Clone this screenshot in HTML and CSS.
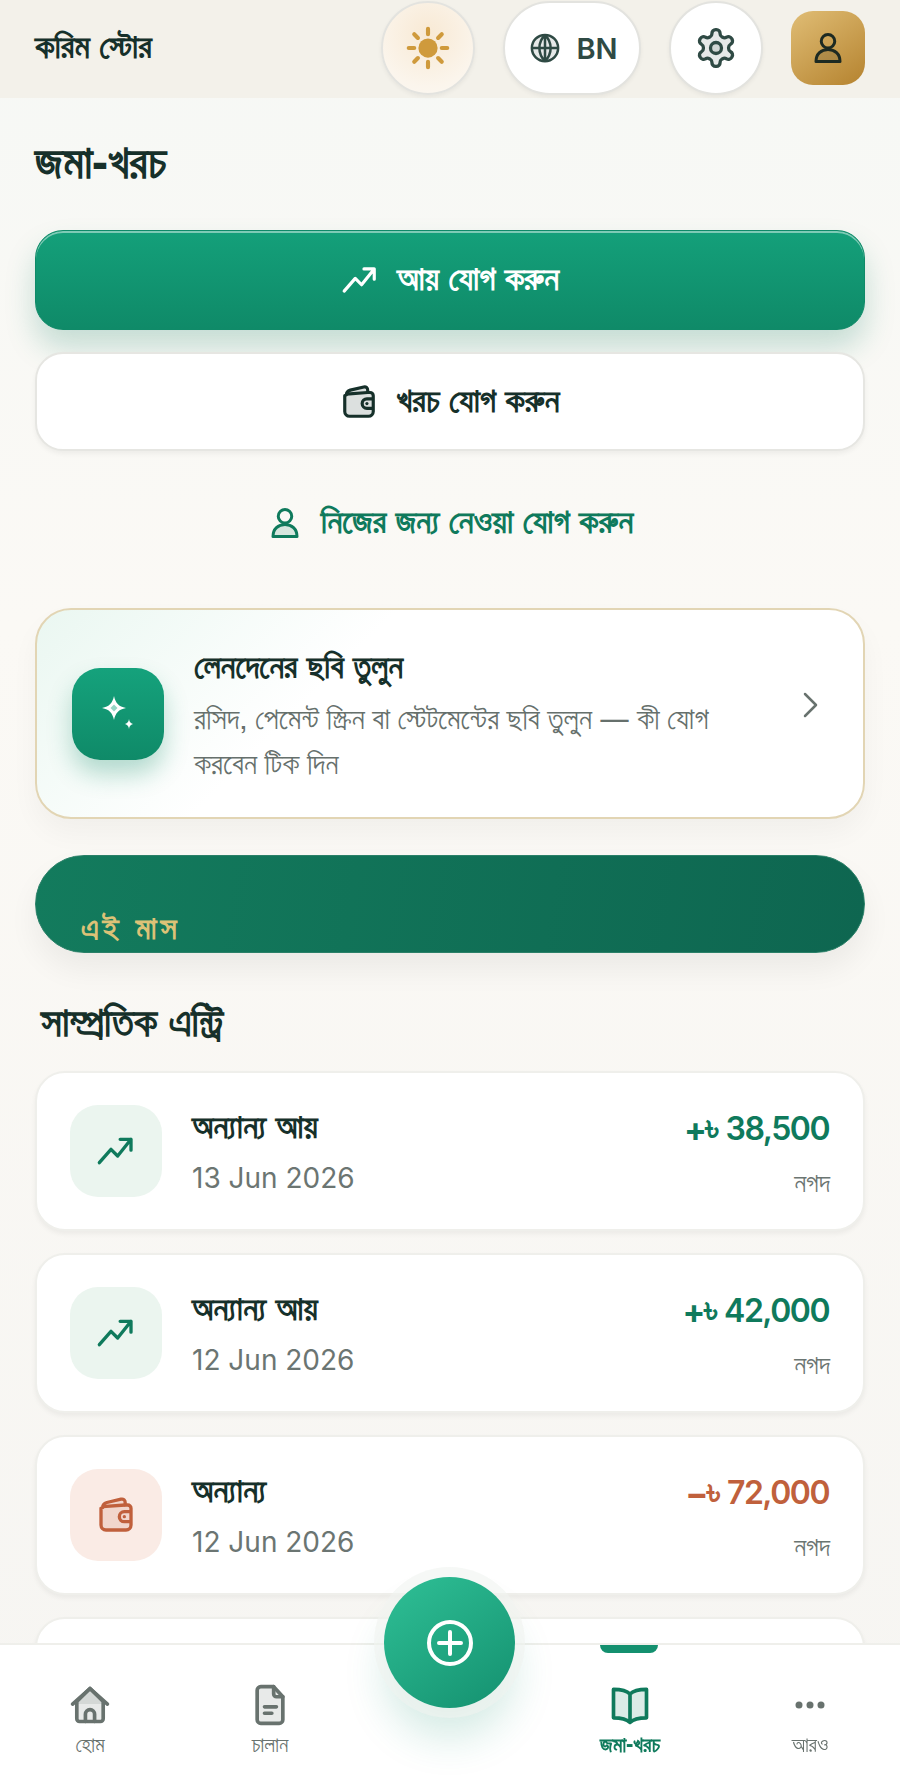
FILE: index.html
```html
<!DOCTYPE html>
<html lang="bn">
<head>
    <meta charset="UTF-8">
    <title>জমা-খরচ</title>
    <link rel="stylesheet" href="styles.css">
</head>
<body>
    <svg class="sprite" width="0" height="0">
        <symbol id="trend" viewBox="0 0 24 24"><path d="M2 19l7-8 4 4 8-10M14.500 5H21v6.500" fill="none" stroke="currentColor" stroke-width="2" stroke-linecap="round" stroke-linejoin="round"/></symbol>
        <symbol id="wallet" viewBox="0 0 24 24"><path d="M4 7.500C4 6 5 5 6.500 4.500L15 2.500c1.500-.3 2.500.5 2.500 2V6H19a2 2 0 0 1 2 2v10a3 3 0 0 1-3 3H6a3 3 0 0 1-3-3V8z" fill="currentColor" fill-opacity=".15" stroke="currentColor" stroke-width="2" stroke-linejoin="round"/><path d="M4 7l13.500-1M21 10h-4a3 3 0 0 0 0 6h4" fill="none" stroke="currentColor" stroke-width="2"/><circle cx="17" cy="13" r="1" fill="currentColor"/></symbol>
        <symbol id="user" viewBox="0 0 24 24"><circle cx="12" cy="7.500" r="4.500" fill="none" stroke="currentColor" stroke-width="2"/><path d="M4 21c0-5 3.500-8 8-8s8 3 8 8z" fill="currentColor" fill-opacity=".15" stroke="currentColor" stroke-width="2" stroke-linejoin="round"/></symbol>
    </svg>

    <header class="topbar">
        <div class="store-name">করিম স্টোর</div>
        <div class="top-actions">
            <button class="round-btn sun-btn">
                <svg width="44" height="44" viewBox="0 0 48 48" fill="none" stroke="#cf9a3c" stroke-width="4.500" stroke-linecap="round">
                    <circle cx="24" cy="24" r="10.500" fill="#cf9a3c" stroke="none"/>
                    <path d="M24 3v6M24 39v6M3 24h6M39 24h6M9 9l4 4M35 35l4 4M9 39l4-4M35 13l4-4"/>
                </svg>
            </button>
            <button class="round-btn lang-btn">
                <svg width="30" height="30" viewBox="0 0 24 24" fill="#2f4a44" fill-opacity=".12" stroke="#2f4a44" stroke-width="2">
                    <circle cx="12" cy="12" r="10.500"/>
                    <path d="M1.500 12h21M12 1.500v21M12 1.500c-6 6-6 15 0 21M12 1.500c6 6 6 15 0 21" fill="none"/>
                </svg>
                <span>BN</span>
            </button>
            <button class="round-btn gear-btn">
                <svg width="44" height="44" viewBox="0 0 24 24" fill="#2f4a44" fill-opacity=".12" stroke="#2f4a44" stroke-width="1.800" stroke-linejoin="round">
                    <path d="M12.220 2h-.44a2 2 0 0 0-2 2v.18a2 2 0 0 1-1 1.730l-.43.25a2 2 0 0 1-2 0l-.15-.08a2 2 0 0 0-2.730.73l-.22.38a2 2 0 0 0 .73 2.730l.15.1a2 2 0 0 1 1 1.720v.51a2 2 0 0 1-1 1.740l-.15.09a2 2 0 0 0-.73 2.730l.22.38a2 2 0 0 0 2.730.73l.15-.08a2 2 0 0 1 2 0l.43.25a2 2 0 0 1 1 1.730V20a2 2 0 0 0 2 2h.44a2 2 0 0 0 2-2v-.18a2 2 0 0 1 1-1.730l.43-.25a2 2 0 0 1 2 0l.15.08a2 2 0 0 0 2.730-.73l.22-.39a2 2 0 0 0-.73-2.730l-.15-.08a2 2 0 0 1-1-1.740v-.5a2 2 0 0 1 1-1.740l.15-.09a2 2 0 0 0 .73-2.730l-.22-.38a2 2 0 0 0-2.730-.73l-.15.08a2 2 0 0 1-2 0l-.43-.25a2 2 0 0 1-1-1.730V4a2 2 0 0 0-2-2z"/>
                    <circle cx="12" cy="12" r="3"/>
                </svg>
            </button>
            <button class="avatar-btn">
                <svg width="36" height="36"><use href="#user"/></svg>
            </button>
        </div>
    </header>

    <main class="content">
        <h1 class="page-title">জমা-খরচ</h1>

        <button class="action-btn income-btn">
            <svg width="38" height="38"><use href="#trend"/></svg>
            আয় যোগ করুন
        </button>
        <button class="action-btn expense-btn">
            <svg width="38" height="38"><use href="#wallet"/></svg>
            খরচ যোগ করুন
        </button>
        <button class="action-btn self-btn">
            <svg width="36" height="36"><use href="#user"/></svg>
            নিজের জন্য নেওয়া যোগ করুন
        </button>

        <div class="photo-card">
            <div class="photo-icon">
                <svg width="52" height="52" viewBox="0 0 52 52" fill="#fff">
                    <path d="M22 8c1.500 7 4.500 10.500 12 12-7.500 1.500-10.500 5-12 12-1.500-7-4.500-10.500-12-12 7.500-1.500 10.500-5 12-12z"/>
                    <path d="M22 16.500l3.500 3.500-3.500 3.500-3.500-3.500z" fill="#15a27c" fill-opacity=".45"/>
                    <path d="M37 31c.4 3 1.500 4.200 4 5-2.500.8-3.600 2-4 5-.4-3-1.500-4.200-4-5 2.500-.8 3.600-2 4-5z"/>
                </svg>
            </div>
            <div class="photo-text">
                <div class="photo-title">লেনদেনের ছবি তুলুন</div>
                <div class="photo-sub">রসিদ, পেমেন্ট স্ক্রিন বা স্টেটমেন্টের ছবি তুলুন — কী যোগ করবেন টিক দিন</div>
            </div>
            <svg class="chevron" width="20" height="30" viewBox="0 0 20 30" fill="none" stroke="#68726e" stroke-width="2.500" stroke-linecap="round" stroke-linejoin="round"><path d="M4 4l11 11L4 26"/></svg>
        </div>

        <div class="month-banner">
            <span class="month-label">এই মাস</span>
        </div>

        <h2 class="section-title">সাম্প্রতিক এন্ট্রি</h2>

        <div class="entry">
            <div class="entry-icon icon-in"><svg width="40" height="40"><use href="#trend"/></svg></div>
            <div class="entry-info">
                <div class="entry-name">অন্যান্য আয়</div>
                <div class="entry-date">13 Jun 2026</div>
            </div>
            <div class="entry-right">
                <div class="entry-amount amount-in"><span class="taka">+৳</span> 38,500</div>
                <div class="entry-method">নগদ</div>
            </div>
        </div>
        <div class="entry">
            <div class="entry-icon icon-in"><svg width="40" height="40"><use href="#trend"/></svg></div>
            <div class="entry-info">
                <div class="entry-name">অন্যান্য আয়</div>
                <div class="entry-date">12 Jun 2026</div>
            </div>
            <div class="entry-right">
                <div class="entry-amount amount-in"><span class="taka">+৳</span> 42,000</div>
                <div class="entry-method">নগদ</div>
            </div>
        </div>
        <div class="entry">
            <div class="entry-icon icon-out"><svg width="40" height="40"><use href="#wallet"/></svg></div>
            <div class="entry-info">
                <div class="entry-name">অন্যান্য</div>
                <div class="entry-date">12 Jun 2026</div>
            </div>
            <div class="entry-right">
                <div class="entry-amount amount-out"><span class="taka">−৳</span> 72,000</div>
                <div class="entry-method">নগদ</div>
            </div>
        </div>
        <div class="entry"></div>
    </main>

    <nav class="bottom-nav">
        <a class="nav-item">
            <svg width="44" height="44" viewBox="0 0 24 24" fill="#68726e" fill-opacity=".15" stroke="#68726e" stroke-width="2" stroke-linecap="round" stroke-linejoin="round"><path d="M2.500 11.500L12 3l9.500 8.500"/><path d="M4.800 10v9.500A1.500 1.500 0 0 0 6.300 21h11.400a1.500 1.500 0 0 0 1.500-1.500V10L12 3z"/><path d="M9.500 21v-4a2.500 2.500 0 0 1 5 0v4" fill="none"/></svg>
            <span>হোম</span>
        </a>
        <a class="nav-item">
            <svg width="44" height="44" viewBox="0 0 24 24" fill="#68726e" fill-opacity=".15" stroke="#68726e" stroke-width="2" stroke-linecap="round" stroke-linejoin="round"><path d="M7 2h7l5 5.500V20a2 2 0 0 1-2 2H7a2 2 0 0 1-2-2V4a2 2 0 0 1 2-2z"/><path d="M14 2v4a1.500 1.500 0 0 0 1.500 1.500H19M9 13h6.500M9 16.500h4" fill="none"/></svg>
            <span>চালান</span>
        </a>
        <div class="nav-item nav-gap">
            <button class="fab">
                <svg width="48" height="48" viewBox="0 0 48 48" fill="none" stroke="#fff" stroke-width="4" stroke-linecap="round"><circle cx="24" cy="24" r="21"/><path d="M24 13v22M13 24h22"/></svg>
            </button>
        </div>
        <a class="nav-item nav-active">
            <svg width="44" height="44" viewBox="0 0 24 24" fill="#0f7a5c" fill-opacity=".15" stroke="#0f7a5c" stroke-width="2" stroke-linejoin="round"><path d="M12 6C10 4 7 3.500 3 3.500V19c4 0 7 .5 9 2.500 2-2 5-2.500 9-2.500V3.500C17 3.500 14 4 12 6zM12 6v15"/></svg>
            <span>জমা-খরচ</span>
        </a>
        <a class="nav-item">
            <svg width="44" height="44" viewBox="0 0 44 44" fill="#68726e"><circle cx="11" cy="22" r="3.500"/><circle cx="22" cy="22" r="3.500"/><circle cx="33" cy="22" r="3.500"/></svg>
            <span>আরও</span>
        </a>
    </nav>
</body>
</html>
```

FILE: styles.css
```css
* { box-sizing: border-box; }
html, body { margin: 0; padding: 0; height: 1791px; overflow: hidden; }
body { font-family: "FreeSans", "Noto Sans", sans-serif; background: linear-gradient(180deg, #f6f8f5 0%, #fbf9f5 35%, #f6f5f2 100%); color: #16302a; }
button { font-family: inherit; border: none; cursor: pointer; }
.sprite { display: block; }

.topbar { height: 98px; display: flex; align-items: center; justify-content: space-between; padding: 0 35px 2px; background: #f3f1ea; }
.store-name { font-size: 34px; font-weight: 700; color: #16302a; }
.top-actions { display: flex; align-items: center; gap: 28px; }
.round-btn { height: 94px; width: 94px; border-radius: 47px; background: #fff; border: 2px solid #e3e3df; display: flex; align-items: center; justify-content: center; box-shadow: 0 2px 4px rgba(0,0,0,0.05); padding: 0; }
.sun-btn { background: radial-gradient(circle at 50% 35%, #f8e9d4 0%, #fbf5ec 70%, #fbf8f3 100%); }
.lang-btn { width: 138px; gap: 16px; padding-left: 4px; }
.lang-btn span { font-family: Inter, sans-serif; font-size: 29px; font-weight: 600; color: #2f4a44; }
.avatar-btn { width: 74px; height: 74px; border-radius: 22px; background: linear-gradient(145deg, #e0bd75, #b5832f); color: #1d2a22; display: flex; align-items: center; justify-content: center; padding: 0; }

.content { padding: 0 35px; }
.page-title { margin: 36px 0 36px; font-size: 46px; line-height: 60px; font-weight: 700; color: #16302a; }

.action-btn { width: 100%; display: flex; align-items: center; justify-content: center; gap: 18px; font-size: 34px; font-weight: 700; line-height: 44px; }
.income-btn { height: 100px; border-radius: 28px; background: linear-gradient(180deg, #14a07a, #0f8a68); color: #fff; border: 1px solid #0f8a68; box-shadow: inset 0 2px 0 rgba(255,255,255,0.45), 0 18px 30px rgba(15,123,95,0.22); }
.expense-btn { height: 99px; margin-top: 22px; border-radius: 28px; background: #fff; color: #16302a; border: 2px solid #e6e6e2; box-shadow: 0 3px 5px rgba(0,0,0,0.05); }
.self-btn { height: 96px; margin-top: 24px; background: none; color: #0f7a5c; }

.photo-card { height: 211px; margin-top: 37px; padding: 0 35px; display: flex; align-items: center; gap: 30px; border-radius: 36px; border: 2px solid #e2d5b4; background: linear-gradient(135deg, #eaf7f1 0%, #ffffff 35%); box-shadow: 0 14px 28px rgba(0,0,0,0.04); }
.photo-icon { width: 92px; height: 92px; flex: none; border-radius: 28px; display: flex; align-items: center; justify-content: center; background: linear-gradient(180deg, #15a27c, #0f8a68); box-shadow: 0 14px 24px rgba(15,138,104,0.3); }
.photo-text { flex: 1; padding-top: 6px; }
.photo-title { font-size: 33.500px; font-weight: 700; line-height: 44px; color: #16302a; margin-bottom: 8px; }
.photo-sub { font-size: 30px; line-height: 45px; color: #66706c; width: 540px; }
.chevron { flex: none; margin: -18px 7px 0 0; }

.month-banner { height: 98px; margin-top: 36px; padding: 55px 45px 0; border-radius: 49px; background: linear-gradient(100deg, #137b5d, #0e6650); border: 1px solid #2b8068; box-shadow: 0 16px 30px rgba(0,0,0,0.06); }
.month-label { font-size: 32px; line-height: 36px; font-weight: 600; letter-spacing: 4px; color: #dcc277; display: block; }

.section-title { margin: 45px 0 21px 6px; font-size: 41px; line-height: 52px; font-weight: 700; color: #16302a; }

.entry { height: 160px; margin-bottom: 22px; padding: 0 33px; display: flex; align-items: center; gap: 30px; background: #fff; border-radius: 30px; border: 2px solid #efefeb; box-shadow: 0 3px 5px rgba(0,0,0,0.05); }
.entry-icon { width: 92px; height: 92px; flex: none; border-radius: 28px; display: flex; align-items: center; justify-content: center; }
.icon-in { background: #ebf5ef; color: #0f7a5c; }
.icon-out { background: #faebe5; color: #c0603c; }
.entry-info { flex: 1; padding-top: 4px; }
.entry-name { font-size: 34px; font-weight: 700; line-height: 44px; color: #16302a; }
.entry-date { font-family: Inter, sans-serif; font-size: 28px; line-height: 44px; margin-top: 6px; color: #6b7572; }
.entry-right { text-align: right; padding-top: 3px; }
.entry-amount { font-family: Inter, sans-serif; font-size: 32px; font-weight: 600; letter-spacing: -1.500px; line-height: 44px; margin-right: 1px; }
.taka { font-family: "FreeSans", sans-serif; font-size: 35px; font-weight: 700; letter-spacing: 0; }
.amount-in { color: #0f7a5c; }
.amount-out { color: #c0603c; }
.entry-method { font-size: 27px; line-height: 30px; margin-top: 17px; color: #6b7572; }

.bottom-nav { position: fixed; left: 0; right: 0; bottom: 0; height: 148px; display: grid; grid-template-columns: repeat(5, 1fr); background: #fff; border-top: 2px solid #efefeb; }
.nav-item { display: flex; flex-direction: column; align-items: center; padding-top: 38px; font-size: 21px; line-height: 30px; color: #68726e; position: relative; }
.nav-item span { margin-top: 4px; }
.nav-active { color: #0f7a5c; font-weight: 700; }
.nav-active::before { content: ""; position: absolute; top: 0; left: 60px; width: 58px; height: 8px; background: #14906f; border-radius: 0 0 8px 8px; }
.nav-gap { padding: 0; }
.fab { position: absolute; top: -68px; left: 24px; width: 131px; height: 131px; border-radius: 50%; background: linear-gradient(145deg, #2fc096, #14906f); display: flex; align-items: center; justify-content: center; box-shadow: 0 0 0 10px rgba(240,243,240,0.6), 0 30px 40px rgba(20,144,111,0.18); padding: 0; }
```
